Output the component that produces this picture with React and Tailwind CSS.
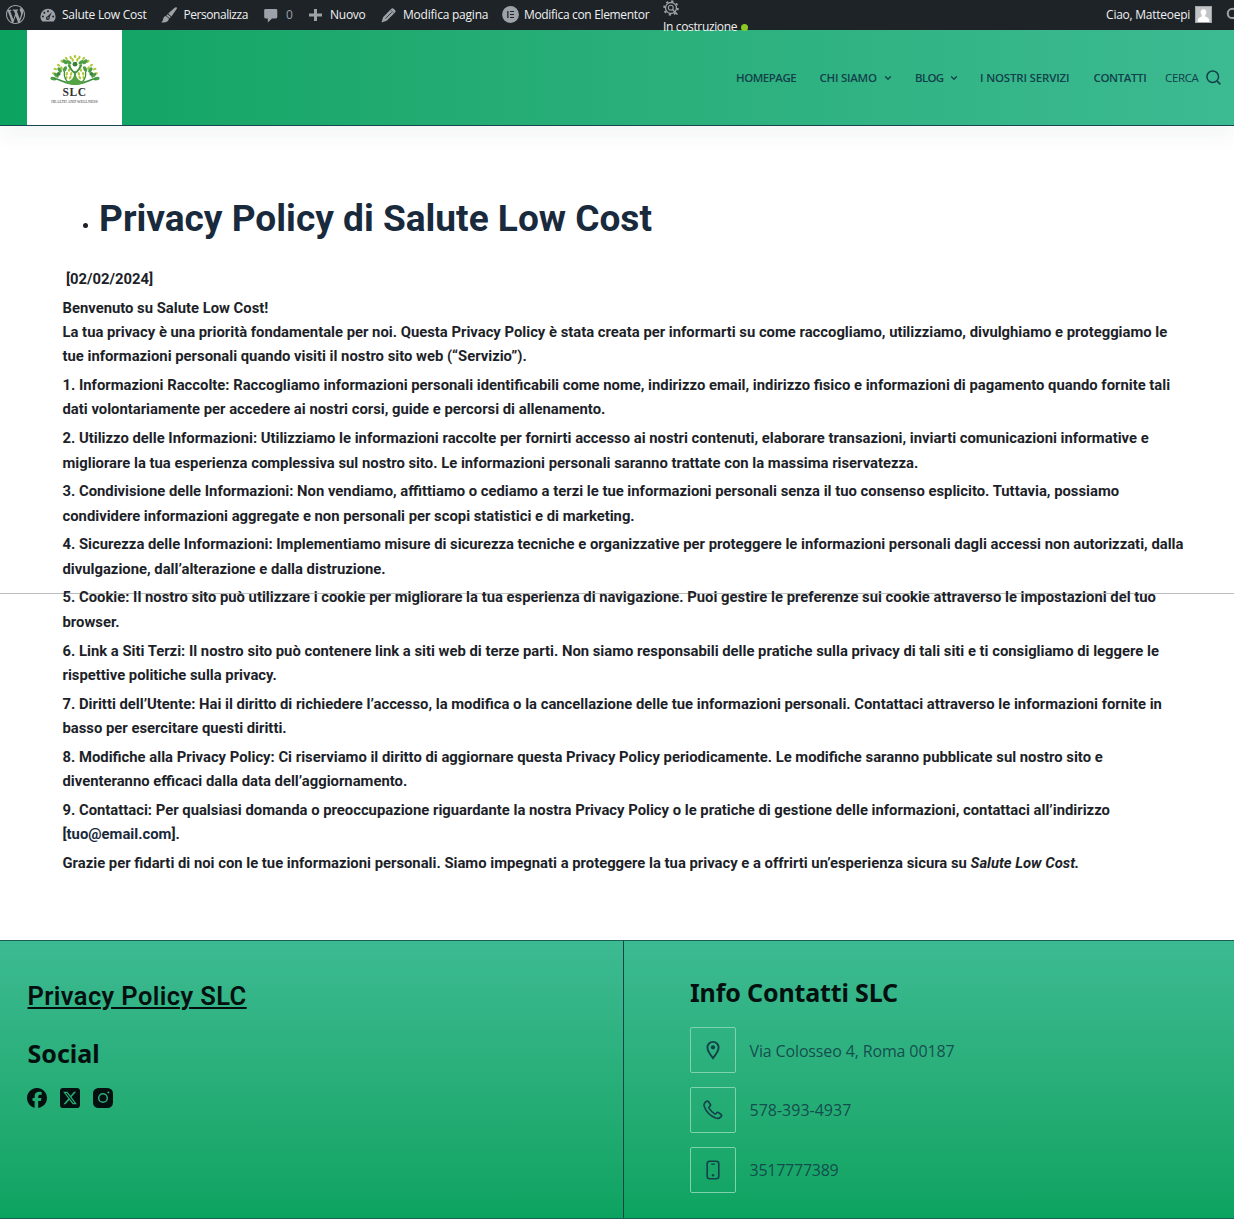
import { FaFacebook, FaSquareXTwitter } from "react-icons/fa6";
import { ChevronDown, Search } from "lucide-react";

const WordPressIcon = () => (
  <svg viewBox="0 0 20 20" className="size-[19px] fill-[#9ca2a7]">
    <path d="M20 10c0-5.51-4.49-10-10-10C4.48 0 0 4.49 0 10c0 5.52 4.48 10 10 10 5.51 0 10-4.48 10-10zM7.78 15.37L4.37 6.22c.55-.02 1.17-.08 1.17-.08.5-.06.44-1.13-.06-1.11 0 0-1.45.11-2.37.11-.18 0-.37 0-.58-.01C4.12 2.69 6.87 1.11 10 1.11c2.33 0 4.45.87 6.05 2.34-.68-.11-1.65.39-1.65 1.58 0 .74.45 1.36.9 2.1.35.61.55 1.36.55 2.46 0 1.49-1.4 5-1.4 5l-3.03-8.37c.54-.02.82-.17.82-.17.5-.05.44-1.25-.06-1.22 0 0-1.44.12-2.38.12-.87 0-2.33-.12-2.33-.12-.5-.03-.56 1.2-.06 1.22l.92.08 1.26 3.41zM17.41 10c.24-.64.74-1.87.43-4.25.7 1.29 1.05 2.71 1.05 4.25 0 3.29-1.73 6.24-4.4 7.78.97-2.59 1.94-5.2 2.92-7.78zM6.1 18.09C3.12 16.65 1.11 13.53 1.11 10c0-1.3.23-2.48.72-3.59C3.25 10.3 4.67 14.2 6.1 18.09zm4.03-6.63l2.58 6.98c-.86.29-1.76.45-2.71.45-.79 0-1.57-.11-2.29-.33.81-2.38 1.62-4.74 2.42-7.1z" />
  </svg>
);

const DashboardIcon = () => (
  <svg viewBox="0 0 16 14" className="h-[14px] w-4">
    <path d="M2.3 13.6h11.4A7.6 7.6 0 0 0 15.6 8.400A7.6 7.6 0 0 0 .4 8.400A7.6 7.6 0 0 0 2.300 13.600z" fill="#9ca2a7" />
    <g fill="#1d2327">
      <circle cx="8" cy="3.200" r="1" />
      <circle cx="4.300" cy="4.800" r="1" />
      <circle cx="2.900" cy="8.500" r="1" />
      <circle cx="13.100" cy="8.500" r="1" />
      <path d="M11.900 3.900 9.600 9.300a1.900 1.900 0 1 1-1.900-1.100z" />
    </g>
    <circle cx="8" cy="10" r=".8" fill="#9ca2a7" />
  </svg>
);

const BrushIcon = () => (
  <svg viewBox="0 0 16 16" className="size-4 fill-[#9ca2a7]">
    <path d="M15.700.4c.6.500.2 1.300-.4 2.200L10.400 9.400 7.200 6.600 13.400 1c.8-.8 1.700-1.100 2.300-.6z" />
    <path d="M6.700 7.200l3.100 2.700c-.4.500-.8 1-1.300 1.400L5.300 8.600c.3-.5.800-1 1.400-1.400z" />
    <path d="M5 9.100l3 2.700c-.3 2.900-3.800 4.300-7.900 3.400 1.800-.8 1.700-1.900 2.100-3.400.4-1.400 1.500-2.600 2.800-2.700z" />
  </svg>
);

const CommentIcon = () => (
  <svg viewBox="0 0 14 14" className="mt-px size-[14px] fill-[#9ca2a7]">
    <path d="M1.500 0h10.500a1.300 1.300 0 0 1 1.300 1.300v6.800a1.300 1.300 0 0 1-1.300 1.300H8L3.800 13.600V9.400H1.500A1.300 1.300 0 0 1 .2 8.100V1.300A1.300 1.300 0 0 1 1.500 0z" />
  </svg>
);

const PlusIcon = () => (
  <svg viewBox="0 0 13 12" className="-ml-px h-3 w-[13px] fill-[#9ca2a7]">
    <path d="M5 0h3v4.500h5v3H8V12H5V7.500H0v-3h5z" />
  </svg>
);

const PencilIcon = () => (
  <svg viewBox="0 0 14 14" className="-ml-px size-[15px]">
    <path d="M9.600.8c.7-.8 1.600-.7 2.400.1l1 1c.8.800.8 1.600.1 2.400L5.300 12 .5 13.500 1.900 8.600z" fill="#9ca2a7" />
    <path d="M4.200 9.900 10 4" stroke="#1d2327" strokeWidth=".8" fill="none" />
    <path d="M8.900 1.700l3.300 3.300" stroke="#1d2327" strokeWidth=".5" fill="none" />
  </svg>
);

const ElementorIcon = () => (
  <svg viewBox="0 0 17 17" className="-mt-px -ml-[0.5px] size-[17px]">
    <circle cx="8.500" cy="8.500" r="8.400" fill="#9ca2a7" />
    <path d="M5.200 5v7h1.300V5zM8 5v1.100h4V5zM8 7.900v1.100h4V7.900zM8 10.900V12h4v-1.100z" fill="#1d2327" />
  </svg>
);

const GearIcon = () => (
  <svg viewBox="0 0 16 16" className="size-4 shrink-0" fill="none" stroke="#9ca2a7">
    <circle cx="8" cy="8" r="5.500" strokeWidth="1.300" />
    <circle cx="8" cy="8" r="6.900" strokeWidth="1.700" strokeDasharray="2.300 3.120" />
    <circle cx="7.800" cy="7.700" r="2.400" strokeWidth="1.100" />
    <path d="M9.500 9.500l5 5" strokeWidth="1.500" />
  </svg>
);

const adminItems = [
  { Icon: DashboardIcon, label: "Salute Low Cost", box: "w-[121px]", slot: "w-[22px]", text: "tracking-[-0.27px]" },
  { Icon: BrushIcon, label: "Personalizza", box: "w-[103px]", slot: "w-[22.5px]", text: "tracking-[-0.45px]" },
  { Icon: CommentIcon, label: "0", box: "w-[46px]", slot: "w-[22px]", text: "text-[#9ca2a7]" },
  { Icon: PlusIcon, label: "Nuovo", box: "w-[72px]", slot: "w-[20px]", text: "tracking-[-0.25px]" },
  { Icon: PencilIcon, label: "Modifica pagina", box: "w-[120px]", slot: "w-[21px]", text: "tracking-[-0.22px]" },
  { Icon: ElementorIcon, label: "Modifica con Elementor", box: "w-[161px]", slot: "w-[22px]", text: "tracking-[-0.33px]" },
];

function AdminBar() {
  return (
    <div className="relative z-10 flex h-[30px] whitespace-nowrap bg-[#1d2327] text-[12px] text-[#f0f0f1]">
      <div className="flex w-10 shrink-0 items-center pb-px pl-1.5"><WordPressIcon /></div>
      {adminItems.map(({ Icon, label, box, slot, text }) => (
        <div key={label} className={`flex shrink-0 items-center ${box}`}>
          <span className={`shrink-0 ${slot}`}><Icon /></span>
          <span className={text}>{label}</span>
        </div>
      ))}
      <div className="flex flex-col">
        <GearIcon />
        <div className="mt-[3px] flex items-center gap-1 leading-4">
          <span className="tracking-[-0.35px]">In costruzione</span>
          <span className="size-[7px] rounded-full bg-[#8bc926]" />
        </div>
      </div>
      <div className="ml-auto flex items-center">
        <span className="tracking-[-0.26px]">Ciao, Matteoepi</span>
        <svg viewBox="0 0 17 17" className="mb-px ml-[5px] size-[17px] shrink-0">
          <path d="M0 0h17v17H0z" fill="#a2a4a6" />
          <path d="M1 1h15v15H1z" fill="#c3c4c5" />
          <path d="M8.500 3.200c2 0 3 1.500 2.800 3.400-.1 1.300-.6 2-1.100 2.600v1.300c1.700.5 3.800 1.400 4 3.500V16H2.800v-2c.2-2.100 2.300-3 4-3.500V9.200C6.300 8.600 5.800 7.900 5.700 6.600 5.500 4.700 6.500 3.200 8.500 3.200z" fill="#fff" />
        </svg>
        <div className="ml-[14px] w-2 overflow-hidden pb-0.5"><Search className="size-[14px] text-[#9ca2a7]" strokeWidth={3.500} /></div>
      </div>
    </div>
  );
}

const leaves = [
  [26, 3, 0], [21.500, 4, -15], [30.500, 4, 15], [17, 5, -35], [35, 5, 35], [12.500, 8, -50], [39.500, 8, 50],
  [9, 12, -60], [43, 12, 60], [5.500, 16, -70], [46.500, 16, 70], [23.500, 6.500, -10], [28.500, 6.500, 10], [12, 15, -30],
  [40, 15, 30], [4, 20.500, -80], [48, 20.500, 80], [20, 17, 20], [32, 17, -20], [17.500, 21, 20], [34.500, 21, -20],
  [21, 25, 30], [31, 25, -30], [20.500, 13, 20], [31.500, 13, -20], [17, 25, 20], [35, 25, -20], [22, 21, 10], [30, 21, -10],
];
const bigLeaves = [
  [15.500, 8.500, -45], [36.500, 8.500, 45], [10, 17, -30], [42, 17, 30], [3.500, 26, -80], [48.500, 26, 80],
  [15.500, 16, 25], [36.500, 16, -25], [19.500, 9, -60], [32.500, 9, 60], [6.500, 22.500, -50], [45.500, 22.500, 50],
];

function Logo() {
  return (
    <div className="ml-[27px] flex h-[95px] w-[95px] flex-col items-center bg-white pt-[23px]">
      <svg viewBox="0 0 52 33" className="h-[33px] w-[50px] shrink-0">
        {leaves.map(([x, y, a], i) => <ellipse key={i} cx={x} cy={y} rx="1.200" ry="1.900" transform={`rotate(${a} ${x} ${y})`} fill="#b0c83a" />)}
        {bigLeaves.map(([x, y, a], i) => <ellipse key={i} cx={x} cy={y} rx="1.800" ry="3.100" transform={`rotate(${a} ${x} ${y})`} fill="#4b9e45" />)}
        <circle cx="26" cy="11" r="2.500" fill="#36803b" />
        <circle cx="9" cy="21" r="2" fill="#36803b" />
        <circle cx="43" cy="21" r="2" fill="#36803b" />
        <g fill="none" stroke="#3f913f" strokeLinecap="round">
          <path d="M26 30V19M26 20c-3-1-4.500-4-6.500-8M26 20c3-1 4.500-4 6.500-8" strokeWidth="2" />
          <path d="M25 31c-8 0-11-6-10-12M27 31c8 0 11-6 10-12" strokeWidth="1.200" />
          <path d="M26 31.500c-11 .5-15-5-21-5.500M26 31.500c11 .5 15-5 21-5.500" strokeWidth="1.800" />
        </g>
        <path d="M15 28.500c5 1 8.500-1 10-6h2c1.500 5 5 7 10 6-4 5.500-18 5.500-22 0z" fill="#55a443" />
      </svg>
      <span className="font-['Liberation_Serif'] text-[11.500px] leading-3 font-semibold tracking-[0.5px] text-[#333]">SLC</span>
      <span className="mt-px font-['Liberation_Serif'] text-[4px] leading-[5px] tracking-[-0.02px] whitespace-nowrap text-[#333]">HEALTH AND WELLNESS</span>
    </div>
  );
}

const nav = [
  { label: "HOMEPAGE", box: "w-[83.5px]", text: "tracking-[-0.5px]" },
  { label: "CHI SIAMO", box: "w-[95.5px]", text: "tracking-[-0.25px]", menu: true },
  { label: "BLOG", box: "w-[65px]", text: "tracking-[-0.7px]", menu: true },
  { label: "I NOSTRI SERVIZI", box: "w-[113.5px]", text: "tracking-[-0.18px]" },
  { label: "CONTATTI", box: "w-[71.5px]", text: "tracking-[-0.4px]" },
];

function Header() {
  return (
    <header className="flex h-24 border-b border-[#174650] bg-linear-to-r from-[#0ba360] to-[#3cba92] shadow-[0_10px_20px_rgba(41,51,61,0.05)]">
      <Logo />
      <nav className="ml-auto flex items-center whitespace-nowrap pr-[13px] text-[11.5px] font-semibold text-[#12414a]">
        {nav.map((n) => (
          <div key={n.label} className={`flex items-center gap-[6px] ${n.box}`}>
            <span className={`font-[630] ${n.text}`}>{n.label}</span>
            {n.menu && <ChevronDown className="size-[10px]" strokeWidth={3} />}
          </div>
        ))}
        <span className="w-[41px] font-normal tracking-[-0.35px]">CERCA</span>
        <svg viewBox="0 0 15 15" className="size-[15px]" fill="none" stroke="currentColor" strokeWidth="1.500">
          <circle cx="6.700" cy="6.700" r="5.800" />
          <path d="M10.900 10.900l3.500 3.500" />
        </svg>
      </nav>
    </header>
  );
}

const sections = [
  ["1. Informazioni Raccolte: Raccogliamo informazioni personali identificabili come nome, indirizzo email, indirizzo fisico e informazioni di pagamento quando fornite tali", "dati volontariamente per accedere ai nostri corsi, guide e percorsi di allenamento."],
  ["2. Utilizzo delle Informazioni: Utilizziamo le informazioni raccolte per fornirti accesso ai nostri contenuti, elaborare transazioni, inviarti comunicazioni informative e", "migliorare la tua esperienza complessiva sul nostro sito. Le informazioni personali saranno trattate con la massima riservatezza."],
  ["3. Condivisione delle Informazioni: Non vendiamo, affittiamo o cediamo a terzi le tue informazioni personali senza il tuo consenso esplicito. Tuttavia, possiamo", "condividere informazioni aggregate e non personali per scopi statistici e di marketing."],
  ["4. Sicurezza delle Informazioni: Implementiamo misure di sicurezza tecniche e organizzative per proteggere le informazioni personali dagli accessi non autorizzati, dalla", "divulgazione, dall’alterazione e dalla distruzione."],
  ["5. Cookie: Il nostro sito può utilizzare i cookie per migliorare la tua esperienza di navigazione. Puoi gestire le preferenze sui cookie attraverso le impostazioni del tuo", "browser."],
  ["6. Link a Siti Terzi: Il nostro sito può contenere link a siti web di terze parti. Non siamo responsabili delle pratiche sulla privacy di tali siti e ti consigliamo di leggere le", "rispettive politiche sulla privacy."],
  ["7. Diritti dell’Utente: Hai il diritto di richiedere l’accesso, la modifica o la cancellazione delle tue informazioni personali. Contattaci attraverso le informazioni fornite in", "basso per esercitare questi diritti."],
  ["8. Modifiche alla Privacy Policy: Ci riserviamo il diritto di aggiornare questa Privacy Policy periodicamente. Le modifiche saranno pubblicate sul nostro sito e", "diventeranno efficaci dalla data dell’aggiornamento."],
];

function Policy() {
  return (
    <main className="relative h-[814px] pt-[67px] font-['Roboto',sans-serif] font-bold text-[#1d1f29]">
      <div className="absolute top-[467px] left-0 h-px w-full bg-[#b9bcbc]" />
      <div className="ml-[83px] flex h-[52px] items-center">
        <span className="mt-[12px] mr-[11px] size-[5px] rounded-full bg-[#1d1f29]" />
        <h1 className="whitespace-nowrap text-[37.05px] leading-[52px] text-[#192a3d]">Privacy Policy di Salute Low Cost</h1>
      </div>
      <div className="relative mt-[21.800px] ml-[62.5px] flex flex-col gap-[4.3px] whitespace-nowrap text-[14.825px] leading-[24.4px]">
        <p className="pl-[3.5px]">[02/02/2024]</p>
        <p>
          Benvenuto su Salute Low Cost!<br />
          La tua privacy è una priorità fondamentale per noi. Questa Privacy Policy è stata creata per informarti su come raccogliamo, utilizziamo, divulghiamo e proteggiamo le<br />
          tue informazioni personali quando visiti il nostro sito web (“Servizio”).
        </p>
        {sections.map(([a, b]) => <p key={a}>{a}<br />{b}</p>)}
        <p>
          9. Contattaci: Per qualsiasi domanda o preoccupazione riguardante la nostra Privacy Policy o le pratiche di gestione delle informazioni, contattaci all’indirizzo<br />
          [<span className="text-[#192a3d]">tuo@email.com</span>].
        </p>
        <p>Grazie per fidarti di noi con le tue informazioni personali. Siamo impegnati a proteggere la tua privacy e a offrirti un’esperienza sicura su <em>Salute Low Cost.</em></p>
      </div>
    </main>
  );
}

const InstagramIcon = () => (
  <svg viewBox="0 0 20 20" className="size-5">
    <rect width="20" height="20" rx="5.500" fill="#03100f" />
    <circle cx="10" cy="10" r="4.300" fill="none" stroke="#2bae7c" strokeWidth="1.500" />
    <circle cx="15.400" cy="4.600" r="1" fill="#2bae7c" />
  </svg>
);

const PinIcon = () => (
  <svg viewBox="0 0 20 20" className="size-5" fill="none" stroke="currentColor" strokeWidth="1.900">
    <path d="M10 18.200C6.500 13.800 4.400 10.500 4.400 7.500a5.600 5.600 0 0 1 11.200 0c0 3-2.100 6.300-5.600 10.700z" />
    <circle cx="10" cy="7.300" r="2.100" fill="currentColor" stroke="none" />
  </svg>
);

const PhoneIcon = () => (
  <svg viewBox="0 0 20 20" className="size-5" fill="none" stroke="currentColor" strokeWidth="1.600" strokeLinejoin="round">
    <path d="M2.100 2.500 3.900 1.200c.5-.3 1.100-.2 1.500.3l2 3c.3.500.2 1-.2 1.400L6.100 7c-.3.300-.3.700-.1 1.100 1.500 2.300 3.400 4.200 5.700 5.700.4.300.8.200 1.100-.1l1.100-1.100c.4-.4.9-.4 1.400-.1l2.900 2c.5.400.6 1 .300 1.500-1.400 2.300-3 2.900-5.800 2C7.200 16 3.200 11.900 1.300 6.600.8 5 1 3.600 2.100 2.500z" />
  </svg>
);

const MobileIcon = () => (
  <svg viewBox="0 0 20 20" className="size-5" fill="none" stroke="currentColor" strokeWidth="1.600">
    <rect x="4.200" y="1.300" width="11.600" height="17.400" rx="2.400" />
    <path d="M8.200 4.200h3.600" strokeWidth="1.300" />
    <circle cx="10" cy="15.200" r="1.200" fill="currentColor" stroke="none" />
  </svg>
);

const contacts = [
  { Icon: PinIcon, text: "Via Colosseo 4, Roma 00187", track: "tracking-[-0.14px]" },
  { Icon: PhoneIcon, text: "578-393-4937", track: "" },
  { Icon: MobileIcon, text: "3517777389", track: "tracking-[-0.25px]" },
];

function Footer() {
  return (
    <footer className="flex h-[279px] border-y border-[#1a5f55] bg-linear-to-b from-[#3cba92] to-[#0ba360] text-[#03100f]">
      <div className="w-[624px] border-r border-[#12414a] pt-[38px] pl-[27.500px]">
        <h2 className="font-['Roboto',sans-serif] text-[25.500px] leading-[34px] font-semibold tracking-[0.39px] underline decoration-2 underline-offset-[2px]">Privacy Policy SLC</h2>
        <h2 className="mt-[23px] font-['Noto_Sans',sans-serif] text-[25px] leading-[34px] font-bold">Social</h2>
        <div className="mt-[18px] -ml-[0.5px] flex gap-[13px]">
          <FaFacebook className="size-5" />
          <FaSquareXTwitter className="h-5 w-5" preserveAspectRatio="none" viewBox="0 32 448 448" />
          <InstagramIcon />
        </div>
      </div>
      <div className="pt-[34px] pl-[66px]">
        <h2 className="font-['Noto_Sans',sans-serif] text-[25px] leading-[34px] font-bold tracking-[-0.15px]">Info Contatti SLC</h2>
        <ul className="mt-[18px] flex flex-col gap-[13.800px]">
          {contacts.map(({ Icon, text, track }) => (
            <li key={text} className="flex items-center gap-[13.500px] text-[#12414a]">
              <span className="flex size-[46px] items-center justify-center rounded-[2px] border border-[#7fd3ac]"><Icon /></span>
              <span className={`pt-px text-[16px] text-[#12414a]/90 ${track}`}>{text}</span>
            </li>
          ))}
        </ul>
      </div>
    </footer>
  );
}

export default function App() {
  return (
    <div className="h-[1219px] w-full overflow-hidden bg-white font-['Open_Sans','Noto_Sans',sans-serif]">
      <AdminBar />
      <Header />
      <Policy />
      <Footer />
    </div>
  );
}
